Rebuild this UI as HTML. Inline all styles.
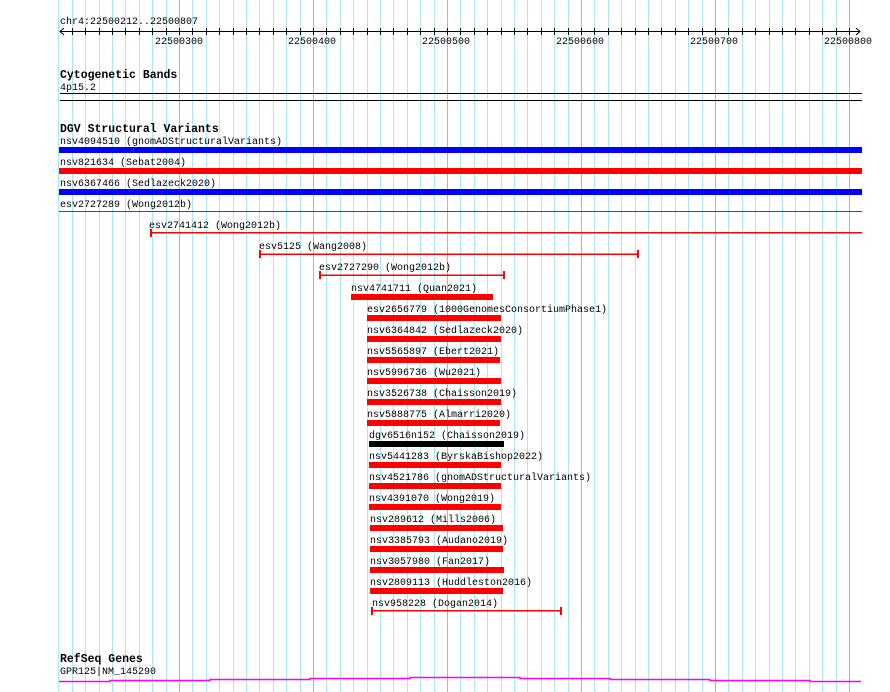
<!DOCTYPE html>
<html><head><meta charset="utf-8"><style>
html,body{margin:0;padding:0;background:#fff;width:890px;height:692px;overflow:hidden}
svg{display:block}
text{font-family:"Liberation Mono",monospace;font-size:10px;fill:#000}
.h{font-weight:bold;font-size:11.5px}
</style></head><body>
<svg width="890" height="692" xmlns="http://www.w3.org/2000/svg">
<defs>
<pattern id="gp" patternUnits="userSpaceOnUse" x="179" y="0" width="134" height="692">
<rect x="0" y="0" width="1" height="692" fill="#86c4e6"/>
<rect x="13" y="0" width="1" height="692" fill="#a8eaf0"/>
<rect x="27" y="0" width="1" height="692" fill="#a8eaf0"/>
<rect x="40" y="0" width="1" height="692" fill="#a8eaf0"/>
<rect x="54" y="0" width="1" height="692" fill="#a8eaf0"/>
<rect x="67" y="0" width="1" height="692" fill="#a8eaf0"/>
<rect x="80" y="0" width="1" height="692" fill="#a8eaf0"/>
<rect x="94" y="0" width="1" height="692" fill="#a8eaf0"/>
<rect x="107" y="0" width="1" height="692" fill="#a8eaf0"/>
<rect x="121" y="0" width="1" height="692" fill="#a8eaf0"/>
</pattern>
<pattern id="tp" patternUnits="userSpaceOnUse" x="179" y="0" width="134" height="692">
<rect x="0" y="28" width="1" height="7" fill="#000"/>
<rect x="13" y="28" width="1" height="7" fill="#000"/>
<rect x="27" y="28" width="1" height="7" fill="#000"/>
<rect x="40" y="28" width="1" height="7" fill="#000"/>
<rect x="54" y="28" width="1" height="7" fill="#000"/>
<rect x="67" y="28" width="1" height="7" fill="#000"/>
<rect x="80" y="28" width="1" height="7" fill="#000"/>
<rect x="94" y="28" width="1" height="7" fill="#000"/>
<rect x="107" y="28" width="1" height="7" fill="#000"/>
<rect x="121" y="28" width="1" height="7" fill="#000"/>
</pattern>
</defs>
<rect x="58" y="0" width="793" height="692" fill="url(#gp)"/>
<!-- ruler -->
<text x="60" y="24">chr4:22500212..22500807</text>
<line x1="60" y1="31.5" x2="860" y2="31.5" stroke="#000"/>
<rect x="70" y="0" width="781" height="40" fill="url(#tp)"/>
<path d="M64 28 L60 31.5 L64 35 M856 28 L860 31.5 L856 35" stroke="#000" fill="none"/>
<text x="155" y="44">22500300</text>
<text x="288" y="44">22500400</text>
<text x="422" y="44">22500500</text>
<text x="556" y="44">22500600</text>
<text x="690" y="44">22500700</text>
<text x="824" y="44">22500800</text>
<!-- cytoband -->
<text class="h" x="60" y="78">Cytogenetic Bands</text>
<text x="60" y="90">4p15.2</text>
<rect x="60" y="93" width="802" height="1" fill="#000"/>
<rect x="60" y="100" width="802" height="1" fill="#000"/>
<!-- DGV -->
<text class="h" x="60" y="132">DGV Structural Variants</text>
<text x="60" y="144">nsv4094510 (gnomADStructuralVariants)</text>
<rect x="59" y="147" width="803" height="6" fill="#0000ff"/>
<text x="60" y="165">nsv821634 (Sebat2004)</text>
<rect x="59" y="168" width="803" height="6" fill="#ff0000"/>
<text x="60" y="186">nsv6367466 (Sedlazeck2020)</text>
<rect x="59" y="189" width="803" height="6" fill="#0000ff"/>
<text x="60" y="207">esv2727289 (Wong2012b)</text>
<rect x="59" y="211" width="803" height="1" fill="#ff0000"/>
<text x="149" y="228">esv2741412 (Wong2012b)</text>
<rect x="150" y="232" width="712" height="1.5" fill="#ff0000"/><rect x="150" y="229" width="2" height="8" fill="#ff0000"/>
<text x="259" y="249">esv5125 (Wang2008)</text>
<rect x="260" y="253.5" width="378" height="1.5" fill="#ff0000"/><rect x="259" y="250" width="2" height="8" fill="#ff0000"/><rect x="637" y="250" width="2" height="8" fill="#ff0000"/>
<text x="319" y="270">esv2727290 (Wong2012b)</text>
<rect x="320" y="274.5" width="184" height="1.5" fill="#ff0000"/><rect x="319" y="271" width="2" height="8" fill="#ff0000"/><rect x="503" y="271" width="2" height="8" fill="#ff0000"/>
<text x="351" y="291">nsv4741711 (Quan2021)</text>
<rect x="351" y="294" width="142" height="6" fill="#ff0000"/>
<text x="367" y="312">esv2656779 (1000GenomesConsortiumPhase1)</text>
<rect x="367" y="315" width="134" height="6" fill="#ff0000"/>
<text x="367" y="333">nsv6364842 (Sedlazeck2020)</text>
<rect x="367" y="336" width="134" height="6" fill="#ff0000"/>
<text x="367" y="354">nsv5565897 (Ebert2021)</text>
<rect x="367" y="357" width="133" height="6" fill="#ff0000"/>
<text x="367" y="375">nsv5996736 (Wu2021)</text>
<rect x="367" y="378" width="134" height="6" fill="#ff0000"/>
<text x="367" y="396">nsv3526738 (Chaisson2019)</text>
<rect x="367" y="399" width="134" height="6" fill="#ff0000"/>
<text x="367" y="417">nsv5888775 (Almarri2020)</text>
<rect x="367" y="420" width="133" height="6" fill="#ff0000"/>
<text x="369" y="438">dgv6516n152 (Chaisson2019)</text>
<rect x="369" y="441" width="135" height="6" fill="#000"/>
<text x="369" y="459">nsv5441283 (ByrskaBishop2022)</text>
<rect x="369" y="462" width="132" height="6" fill="#ff0000"/>
<text x="369" y="480">nsv4521786 (gnomADStructuralVariants)</text>
<rect x="369" y="483" width="132" height="6" fill="#ff0000"/>
<text x="369" y="501">nsv4391070 (Wong2019)</text>
<rect x="369" y="504" width="132" height="6" fill="#ff0000"/>
<text x="370" y="522">nsv289612 (Mills2006)</text>
<rect x="370" y="525" width="133" height="6" fill="#ff0000"/>
<text x="370" y="543">nsv3385793 (Audano2019)</text>
<rect x="370" y="546" width="133" height="6" fill="#ff0000"/>
<text x="370" y="564">nsv3057980 (Fan2017)</text>
<rect x="370" y="567" width="134" height="6" fill="#ff0000"/>
<text x="370" y="585">nsv2809113 (Huddleston2016)</text>
<rect x="370" y="588" width="133" height="6" fill="#ff0000"/>
<text x="372" y="606">nsv958228 (Dogan2014)</text>
<rect x="372" y="610" width="189" height="1.5" fill="#ff0000"/><rect x="371" y="607" width="2" height="8" fill="#ff0000"/><rect x="560" y="607" width="2" height="8" fill="#ff0000"/>
<!-- RefSeq -->
<text class="h" x="60" y="662">RefSeq Genes</text>
<text x="60" y="674">GPR125|NM_145290</text>
<path d="M59 681.5 H110 V680.5 H210 V679.5 H310 V678.5 H410 V677.5 H520 V678.5 H610 V679.5 H710 V680.5 H810 V681.5 H861" stroke="#ff00ff" stroke-width="1.5" fill="none"/>
</svg>
</body></html>
